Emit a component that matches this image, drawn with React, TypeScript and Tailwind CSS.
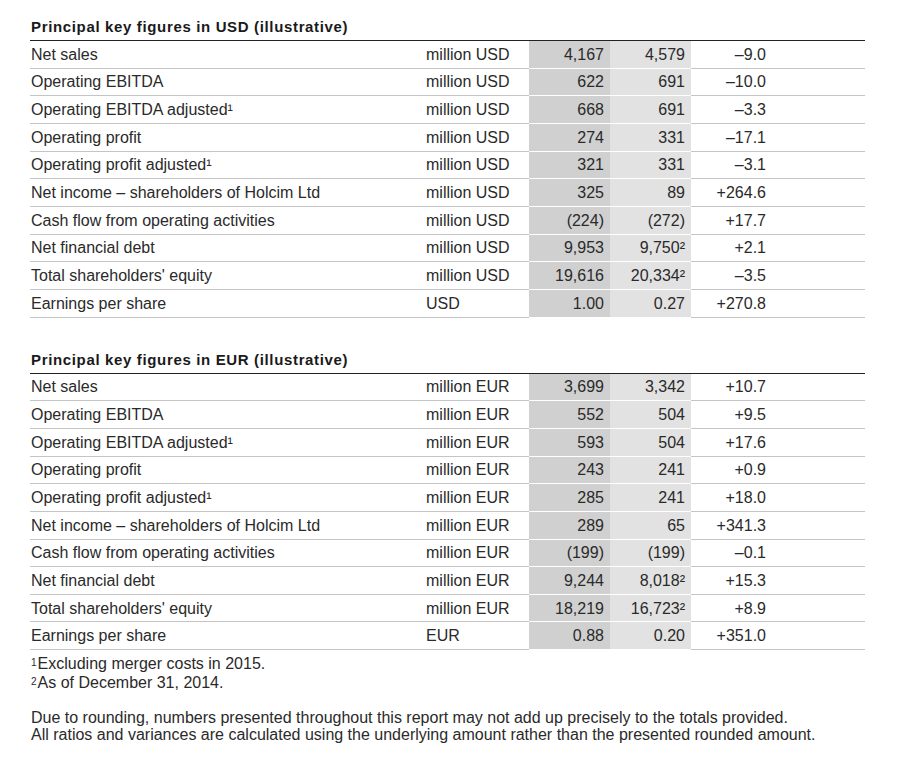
import React from "react";

type Row = [string, string, string, string, string];

const usd: Row[] = [
  ["Net sales", "million USD", "4,167", "4,579", "–9.0"],
  ["Operating EBITDA", "million USD", "622", "691", "–10.0"],
  ["Operating EBITDA adjusted¹", "million USD", "668", "691", "–3.3"],
  ["Operating profit", "million USD", "274", "331", "–17.1"],
  ["Operating profit adjusted¹", "million USD", "321", "331", "–3.1"],
  ["Net income – shareholders of Holcim Ltd", "million USD", "325", "89", "+264.6"],
  ["Cash flow from operating activities", "million USD", "(224)", "(272)", "+17.7"],
  ["Net financial debt", "million USD", "9,953", "9,750²", "+2.1"],
  ["Total shareholders' equity", "million USD", "19,616", "20,334²", "–3.5"],
  ["Earnings per share", "USD", "1.00", "0.27", "+270.8"],
];

const eur: Row[] = [
  ["Net sales", "million EUR", "3,699", "3,342", "+10.7"],
  ["Operating EBITDA", "million EUR", "552", "504", "+9.5"],
  ["Operating EBITDA adjusted¹", "million EUR", "593", "504", "+17.6"],
  ["Operating profit", "million EUR", "243", "241", "+0.9"],
  ["Operating profit adjusted¹", "million EUR", "285", "241", "+18.0"],
  ["Net income – shareholders of Holcim Ltd", "million EUR", "289", "65", "+341.3"],
  ["Cash flow from operating activities", "million EUR", "(199)", "(199)", "–0.1"],
  ["Net financial debt", "million EUR", "9,244", "8,018²", "+15.3"],
  ["Total shareholders' equity", "million EUR", "18,219", "16,723²", "+8.9"],
  ["Earnings per share", "EUR", "0.88", "0.20", "+351.0"],
];

function Table({ title, rows }: { title: string; rows: Row[] }) {
  return (
    <div>
      <div className="h-[26px] pl-[1px] text-[15px] font-bold tracking-[0.65px] text-[#1a1a1a] leading-[26px]">
        {title}
      </div>
      <div className="border-t border-[#222]">
        {rows.map((r, i) => (
          <div key={i} className="flex h-[27.67px] text-[16px] leading-none text-[#2a2a2a]">
            <div className="w-[396px] flex items-center pt-[1px] pl-[1px] border-b border-[#c4c4c4]">{r[0]}</div>
            <div className="w-[103px] flex items-center pt-[1px] border-b border-[#c4c4c4]">{r[1]}</div>
            <div className="w-[81px] flex items-center pt-[1px] justify-end pr-[6px] bg-[#d0d0d0] border-b border-white">{r[2]}</div>
            <div className="w-[81px] flex items-center pt-[1px] justify-end pr-[6px] bg-[#e2e2e2] border-b border-white">{r[3]}</div>
            <div className="w-[81px] flex items-center pt-[1px] justify-end pr-[6px] border-b border-[#c4c4c4]">{r[4]}</div>
            <div className="flex-1 border-b border-[#c4c4c4]"></div>
          </div>
        ))}
      </div>
    </div>
  );
}

export default function App() {
  return (
    <div
      className="w-[899px] h-[761px] bg-white"
      style={{ fontFamily: '"Liberation Sans", Arial, sans-serif' }}
    >
      <div className="pt-[14px] pl-[30px] w-[865px]">
        <Table title="Principal key figures in USD (illustrative)" rows={usd} />
        <div className="h-[29px]"></div>
        <Table title="Principal key figures in EUR (illustrative)" rows={eur} />
        <div className="mt-[4px] pl-[1px] text-[16px] leading-[19px] text-[#2a2a2a]">
          <div><span className="text-[10px] align-top relative top-[-1px] mr-[1px]">1</span>Excluding merger costs in 2015.</div>
          <div><span className="text-[10px] align-top relative top-[-1px] mr-[1px]">2</span>As of December 31, 2014.</div>
        </div>
        <div className="mt-[17px] pl-[1px] text-[16px] leading-[17px] text-[#2a2a2a]">
          <div>Due to rounding, numbers presented throughout this report may not add up precisely to the totals provided.</div>
          <div>All ratios and variances are calculated using the underlying amount rather than the presented rounded amount.</div>
        </div>
      </div>
    </div>
  );
}
